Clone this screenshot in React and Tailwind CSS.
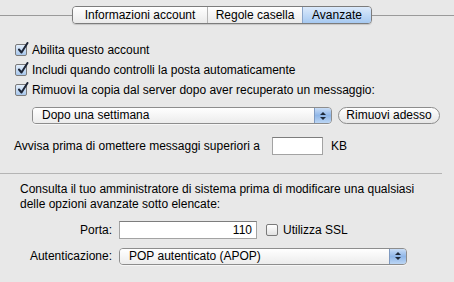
import React from "react";

const font = { fontFamily: '"Lucida Grande", "Liberation Sans", Arial, sans-serif' };

function Check({ checked }) {
  return (
    <span
      className={`relative inline-block w-[12px] h-[12px] rounded-[2px] border border-[#7a7a7a] shrink-0 ${
        checked
          ? "bg-gradient-to-b from-[#e3eefb] to-[#a8c7ec]"
          : "bg-gradient-to-b from-[#ffffff] to-[#e2e2e2]"
      }`}
    >
      {checked && (
        <svg
          className="absolute left-[1px] top-[-3px]"
          width="12"
          height="13"
          viewBox="0 0 12 13"
        >
          <path
            d="M2 7.5 L4.5 10.5 L10.5 1"
            fill="none"
            stroke="#1d2535"
            strokeWidth="2"
            strokeLinecap="round"
            strokeLinejoin="round"
          />
        </svg>
      )}
    </span>
  );
}

function Popup({ label, width }) {
  return (
    <div
      className={`${width} h-[17px] flex rounded-[4px] border border-[#8d8d8d] overflow-hidden shadow-[0_1px_0_rgba(255,255,255,0.6)]`}
    >
      <div className="flex-1 bg-gradient-to-b from-[#ffffff] to-[#ececec] pl-[9px] text-[12px] leading-[15px] text-black">
        {label}
      </div>
      <div className="w-[17px] flex flex-col items-center justify-center gap-[2px] border-l border-[#7f9ac0] bg-gradient-to-b from-[#c9ddf6] via-[#8fb6e8] to-[#bcd6f4]">
        <svg width="6" height="3" viewBox="0 0 6 3">
          <path d="M0 3 L3 0 L6 3 Z" fill="#1f2a3a" />
        </svg>
        <svg width="6" height="3" viewBox="0 0 6 3">
          <path d="M0 0 L3 3 L6 0 Z" fill="#1f2a3a" />
        </svg>
      </div>
    </div>
  );
}

function Field({ value, width }) {
  return (
    <div
      className={`${width} h-[18px] bg-white border border-[#a3a3a3] border-t-[#7d7d7d] px-[4px] text-right text-[12px] leading-[16px] text-black`}
    >
      {value}
    </div>
  );
}

export default function App() {
  return (
    <div
      className="w-[454px] h-[282px] bg-[#e8e8e8] text-black text-[12px] overflow-hidden pt-[6px]"
      style={font}
    >
      {/* Tabs */}
      <div className="flex items-center h-[18px]">
        <div className="w-[72px] h-px bg-[#9a9a9a]" />
        <div className="flex h-[18px] rounded-[4px] border border-[#7c7c7c] overflow-hidden shadow-[0_1px_1px_rgba(0,0,0,0.15)]">
          <div className="w-[134px] bg-gradient-to-b from-[#ffffff] to-[#eaeaea] text-center leading-[16px]">
            Informazioni account
          </div>
          <div className="w-[95px] border-l border-[#b5b5b5] bg-gradient-to-b from-[#ffffff] to-[#eaeaea] text-center leading-[16px]">
            Regole casella
          </div>
          <div className="w-[69px] border-l border-[#8aa4c8] bg-gradient-to-b from-[#dceafb] to-[#a6c9f1] text-center leading-[16px]">
            Avanzate
          </div>
        </div>
        <div className="flex-1 h-px bg-[#9a9a9a]" />
      </div>

      {/* Checkboxes */}
      <div className="mt-[16px] pl-[15px]">
        <div className="h-[20px] flex items-center gap-[5px]">
          <Check checked />
          <span>Abilita questo account</span>
        </div>
        <div className="h-[20px] flex items-center gap-[5px]">
          <Check checked />
          <span>Includi quando controlli la posta automaticamente</span>
        </div>
        <div className="h-[20px] flex items-center gap-[5px]">
          <Check checked />
          <span>Rimuovi la copia dal server dopo aver recuperato un messaggio:</span>
        </div>
      </div>

      {/* Remove after */}
      <div className="mt-[7px] pl-[32px] flex items-center gap-[6px]">
        <Popup label="Dopo una settimana" width="w-[300px]" />
        <div className="w-[102px] h-[17px] rounded-full border border-[#8d8d8d] bg-gradient-to-b from-[#ffffff] to-[#e6e6e6] text-center leading-[15px]">
          Rimuovi adesso
        </div>
      </div>

      {/* Warn size */}
      <div className="mt-[13px] pl-[14px] flex items-center h-[18px]">
        <span>Avvisa prima di omettere messaggi superiori a</span>
        <div className="ml-[12px]">
          <Field value="" width="w-[51px]" />
        </div>
        <span className="ml-[8px]">KB</span>
      </div>

      {/* Separator */}
      <div className="mt-[18px] w-[442px] h-px bg-[#b4b4b4]" />

      {/* Advanced note */}
      <div className="mt-[8px] pl-[20px] pr-[10px] leading-[15px]">
        Consulta il tuo amministratore di sistema prima di modificare una qualsiasi
        <br />
        delle opzioni avanzate sotto elencate:
      </div>

      {/* Port */}
      <div className="mt-[9px] flex items-center h-[18px]">
        <span className="w-[112px] text-right">Porta:</span>
        <div className="ml-[7px]">
          <Field value="110" width="w-[138px]" />
        </div>
        <div className="ml-[9px] flex items-center gap-[5px]">
          <Check />
          <span>Utilizza SSL</span>
        </div>
      </div>

      {/* Auth */}
      <div className="mt-[8px] flex items-center h-[18px]">
        <span className="w-[112px] text-right">Autenticazione:</span>
        <div className="ml-[7px]">
          <Popup label="POP autenticato (APOP)" width="w-[288px]" />
        </div>
      </div>
    </div>
  );
}
